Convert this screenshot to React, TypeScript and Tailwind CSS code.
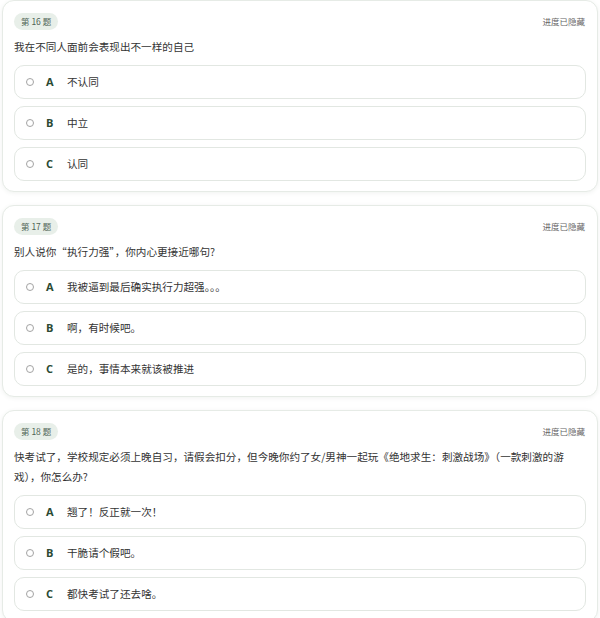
import React from 'react';

type Question = {
  no: number;
  text: string;
  options: { key: string; label: string }[];
};

const questions: Question[] = [
  {
    no: 16,
    text: '我在不同人面前会表现出不一样的自己',
    options: [
      { key: 'A', label: '不认同' },
      { key: 'B', label: '中立' },
      { key: 'C', label: '认同' },
    ],
  },
  {
    no: 17,
    text: '别人说你“执行力强”，你内心更接近哪句?',
    options: [
      { key: 'A', label: '我被逼到最后确实执行力超强。。。' },
      { key: 'B', label: '啊，有时候吧。' },
      { key: 'C', label: '是的，事情本来就该被推进' },
    ],
  },
  {
    no: 18,
    text: '快考试了，学校规定必须上晚自习，请假会扣分，但今晚你约了女/男神一起玩《绝地求生：刺激战场》（一款刺激的游戏），你怎么办?',
    options: [
      { key: 'A', label: '翘了！反正就一次！' },
      { key: 'B', label: '干脆请个假吧。' },
      { key: 'C', label: '都快考试了还去啥。' },
    ],
  },
];

function QuestionCard({ q }: { q: Question }) {
  return (
    <div className="mx-[2px] rounded-[12px] border border-[#e6ebe6] bg-white px-[11px] pt-[12px] pb-[10px] shadow-[0_1px_4px_rgba(60,90,60,0.08)]">
      <div className="flex items-center justify-between">
        <span className="flex h-[17px] items-center rounded-full bg-[#e8efe9] px-[7px] text-[8.5px] text-[#4e6354]">
          第 {q.no} 题
        </span>
        <span className="pr-[1px] text-[8.5px] text-[#666]">进度已隐藏</span>
      </div>
      <p className="mt-[7px] max-w-[562px] text-[10.6px] leading-[20px] text-[#333]">{q.text}</p>
      <div className="mt-[8px] flex flex-col gap-[7px]">
        {q.options.map((o) => (
          <div
            key={o.key}
            className="flex h-[34px] items-center rounded-[10px] border border-[#e2e7e2] bg-white pl-[11px]"
          >
            <span className="h-[8px] w-[8px] rounded-full border border-[#a3a3a3]" />
            <span className="ml-[12px] w-[21px] font-['Open_Sans','Noto_Sans_CJK_SC',sans-serif] text-[11px] font-bold text-[#2b4a33]">
              {o.key}
            </span>
            <span className="text-[10.6px] text-[#333]">{o.label}</span>
          </div>
        ))}
      </div>
    </div>
  );
}

export default function App() {
  return (
    <div className="flex w-[600px] flex-col gap-[13px] bg-white font-['Noto_Sans_CJK_SC',sans-serif]">
      {questions.map((q) => (
        <QuestionCard key={q.no} q={q} />
      ))}
    </div>
  );
}
